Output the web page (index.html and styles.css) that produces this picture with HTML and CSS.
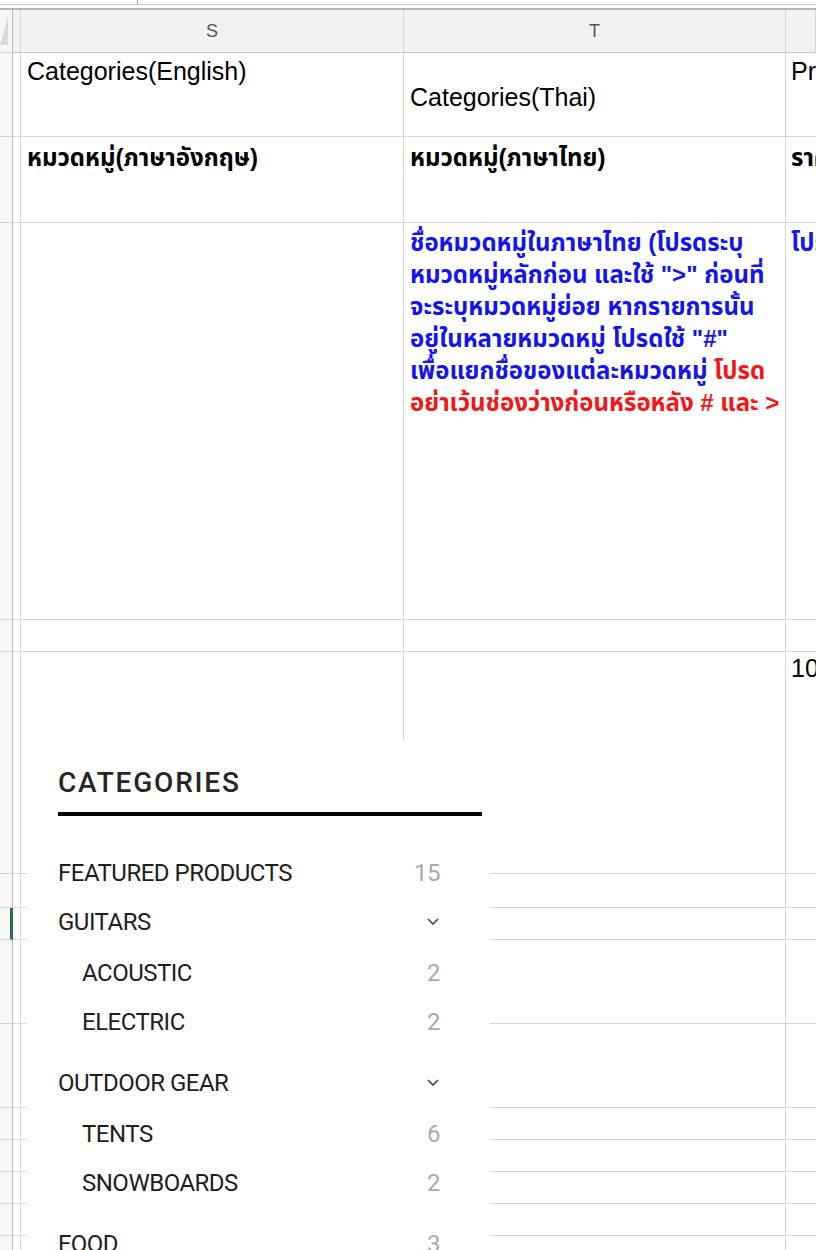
FILE: index.html
```html
<!DOCTYPE html>
<html lang="th">
<head>
    <meta charset="UTF-8">
    <meta name="viewport" content="width=device-width, initial-scale=1.0">
    <title>Categories sheet</title>
    <link rel="stylesheet" href="styles.css">
</head>
<body>
    <div class="screen">
        <div class="topbar"><span class="tick"></span></div>

        <div class="sheet">
            <div class="row h-43">
                <div class="cell row-num corner"><span class="corner-mark"></span></div>
                <div class="cell gap col-label"></div>
                <div class="cell col-label">S</div>
                <div class="cell col-label">T</div>
                <div class="cell col-label"></div>
            </div>

            <div class="row h-84">
                <div class="cell row-num"></div>
                <div class="cell gap"></div>
                <div class="cell">Categories(English)</div>
                <div class="cell middle">Categories(Thai)</div>
                <div class="cell edge">Price</div>
            </div>

            <div class="row h-86">
                <div class="cell row-num"></div>
                <div class="cell gap"></div>
                <div class="cell thai bold">หมวดหมู่(ภาษาอังกฤษ)</div>
                <div class="cell thai bold">หมวดหมู่(ภาษาไทย)</div>
                <div class="cell edge thai bold">ราคา</div>
            </div>

            <div class="row h-397">
                <div class="cell row-num"></div>
                <div class="cell gap"></div>
                <div class="cell"></div>
                <div class="cell thai bold note">
                    ชื่อหมวดหมู่ในภาษาไทย (โปรดระบุ<br>
                    หมวดหมู่หลักก่อน และใช้ "&gt;" ก่อนที่<br>
                    จะระบุหมวดหมู่ย่อย หากรายการนั้น<br>
                    อยู่ในหลายหมวดหมู่ โปรดใช้ "#"<br>
                    เพื่อแยกชื่อของแต่ละหมวดหมู่ <span class="warn">โปรด<br>
                    อย่าเว้นช่องว่างก่อนหรือหลัง # และ &gt;</span>
                </div>
                <div class="cell edge thai bold note">โปรดระบุราคา</div>
            </div>

            <div class="row h-32">
                <div class="cell row-num"></div>
                <div class="cell gap"></div>
                <div class="cell"></div>
                <div class="cell"></div>
                <div class="cell edge"></div>
            </div>

            <div class="row h-222">
                <div class="cell row-num"></div>
                <div class="cell gap"></div>
                <div class="cell"></div>
                <div class="cell"></div>
                <div class="cell edge number">100</div>
            </div>

            <div class="row h-34"><div class="cell row-num"></div><div class="cell gap"></div><div class="cell"></div><div class="cell"></div><div class="cell edge"></div></div>
            <div class="row h-32"><div class="cell row-num active"></div><div class="cell gap"></div><div class="cell"></div><div class="cell"></div><div class="cell edge"></div></div>
            <div class="row h-84"><div class="cell row-num"></div><div class="cell gap"></div><div class="cell"></div><div class="cell"></div><div class="cell edge"></div></div>
            <div class="row h-84"><div class="cell row-num"></div><div class="cell gap"></div><div class="cell"></div><div class="cell"></div><div class="cell edge"></div></div>
            <div class="row h-32"><div class="cell row-num"></div><div class="cell gap"></div><div class="cell"></div><div class="cell"></div><div class="cell edge"></div></div>
            <div class="row h-32"><div class="cell row-num"></div><div class="cell gap"></div><div class="cell"></div><div class="cell"></div><div class="cell edge"></div></div>
            <div class="row h-32"><div class="cell row-num"></div><div class="cell gap"></div><div class="cell"></div><div class="cell"></div><div class="cell edge"></div></div>
            <div class="row h-32"><div class="cell row-num"></div><div class="cell gap"></div><div class="cell"></div><div class="cell"></div><div class="cell edge"></div></div>
            <div class="row h-32"><div class="cell row-num"></div><div class="cell gap"></div><div class="cell"></div><div class="cell"></div><div class="cell edge"></div></div>
        </div>

        <!-- pasted picture of the shop's category menu -->
        <div class="widget">
            <h2 class="widget-title">CATEGORIES</h2>
            <ul class="cat-list">
                <li>
                    <div class="cat-item"><span>FEATURED PRODUCTS</span><span class="cat-count">15</span></div>
                </li>
                <li class="cat-group">
                    <div class="cat-item">
                        <span>GUITARS</span>
                        <svg class="chevron" width="12" height="7" viewBox="0 0 12 7"><path d="M1 1 L6 6 L11 1" fill="none" stroke="#444" stroke-width="1.6"/></svg>
                    </div>
                    <ul class="sub-list">
                        <li class="cat-item"><span>ACOUSTIC</span><span class="cat-count">2</span></li>
                        <li class="cat-item"><span>ELECTRIC</span><span class="cat-count">2</span></li>
                    </ul>
                </li>
                <li class="cat-group">
                    <div class="cat-item">
                        <span>OUTDOOR GEAR</span>
                        <svg class="chevron" width="12" height="7" viewBox="0 0 12 7"><path d="M1 1 L6 6 L11 1" fill="none" stroke="#444" stroke-width="1.6"/></svg>
                    </div>
                    <ul class="sub-list">
                        <li class="cat-item"><span>TENTS</span><span class="cat-count">6</span></li>
                        <li class="cat-item"><span>SNOWBOARDS</span><span class="cat-count">2</span></li>
                    </ul>
                </li>
                <li>
                    <div class="cat-item"><span>FOOD</span><span class="cat-count">3</span></div>
                </li>
            </ul>
        </div>
    </div>
</body>
</html>
```

FILE: styles.css
```css
body {
    margin: 0;
    background-color: #ffffff;
    font-family: "Liberation Sans", "Noto Sans Thai", "Noto Sans", sans-serif;
    overflow: hidden;
}

.screen {
    position: relative;
    width: 816px;
    height: 1250px;
    overflow: hidden;
}

.topbar {
    height: 10px;
    box-sizing: border-box;
    border-bottom: 2px solid #b6b6b6;
    background: linear-gradient(to bottom, #ffffff 4px, #c9c9c9 4px, #c9c9c9 5px, #ffffff 5px);
}

.tick {
    display: block;
    margin-left: 137px;
    width: 1px;
    height: 4px;
    background-color: #9a9a9a;
}

.row {
    display: grid;
    grid-template-columns: 13px 8px 383px 382px 1fr;
}

.h-32 { height: 32px; }
.h-34 { height: 34px; }
.h-43 { height: 43px; }
.h-84 { height: 84px; }
.h-86 { height: 86px; }
.h-222 { height: 222px; }
.h-397 { height: 397px; }

.cell {
    box-sizing: border-box;
    border-right: 1px solid #d6d6d6;
    border-bottom: 1px solid #d6d6d6;
    padding: 4px 6px;
    font-size: 25px;
    line-height: 28px;
    color: #000000;
    white-space: nowrap;
    overflow: hidden;
}

.row-num {
    padding: 0;
    background-color: #f7f7f7;
    border-right-color: #b9b9b9;
}

.row-num.active {
    border-right: 3px solid #217346;
}

.gap {
    padding: 0;
}

.corner {
    display: flex;
    align-items: flex-end;
    padding-bottom: 7px;
}

.corner-mark {
    width: 0;
    height: 0;
    border-left: 8px solid transparent;
    border-bottom: 28px solid #d9d9d9;
}

.col-label {
    background-color: #f2f2f2;
    border-bottom-color: #c6c6c6;
    text-align: center;
    font-size: 18px;
    line-height: 22px;
    padding-top: 10px;
    color: #555555;
}

.middle {
    display: flex;
    align-items: center;
    padding-top: 8px;
}

.edge {
    border-right: none;
    padding-left: 5px;
}

.thai {
    font-family: "Liberation Sans", "Noto Sans Thai", "Noto Sans", sans-serif;
}

.bold {
    font-weight: bold;
    font-size: 24px;
    padding-top: 7px;
}

.note {
    color: #1414f0;
    line-height: 32px;
    padding-top: 4px;
}

.warn {
    color: #f51616;
}

.number {
    padding-top: 2px;
}

/* category menu picture */
.widget {
    position: absolute;
    left: 27px;
    top: 741px;
    bottom: 0;
    width: 463px;
    box-sizing: border-box;
    padding: 26px 8px 0 31px;
    background-color: #ffffff;
    font-family: Roboto, "Liberation Sans", sans-serif;
    color: #1e1e1e;
}

.widget-title {
    margin: 0;
    padding-bottom: 13px;
    border-bottom: 4px solid #000000;
    font-size: 28px;
    line-height: 32px;
    font-weight: 500;
    letter-spacing: 1.8px;
    color: #262626;
}

.cat-list {
    list-style: none;
    margin: 32px 0 0;
    padding: 0;
    width: 382px;
}

.cat-group {
    margin-bottom: 12px;
}

.cat-item {
    display: flex;
    justify-content: space-between;
    align-items: center;
    height: 49px;
    font-size: 24px;
    letter-spacing: -0.5px;
}

.cat-count {
    color: #ababab;
}

.chevron {
    margin-right: 1px;
}

.sub-list {
    list-style: none;
    margin: 2px 0 0;
    padding: 0 0 0 24px;
}
```
